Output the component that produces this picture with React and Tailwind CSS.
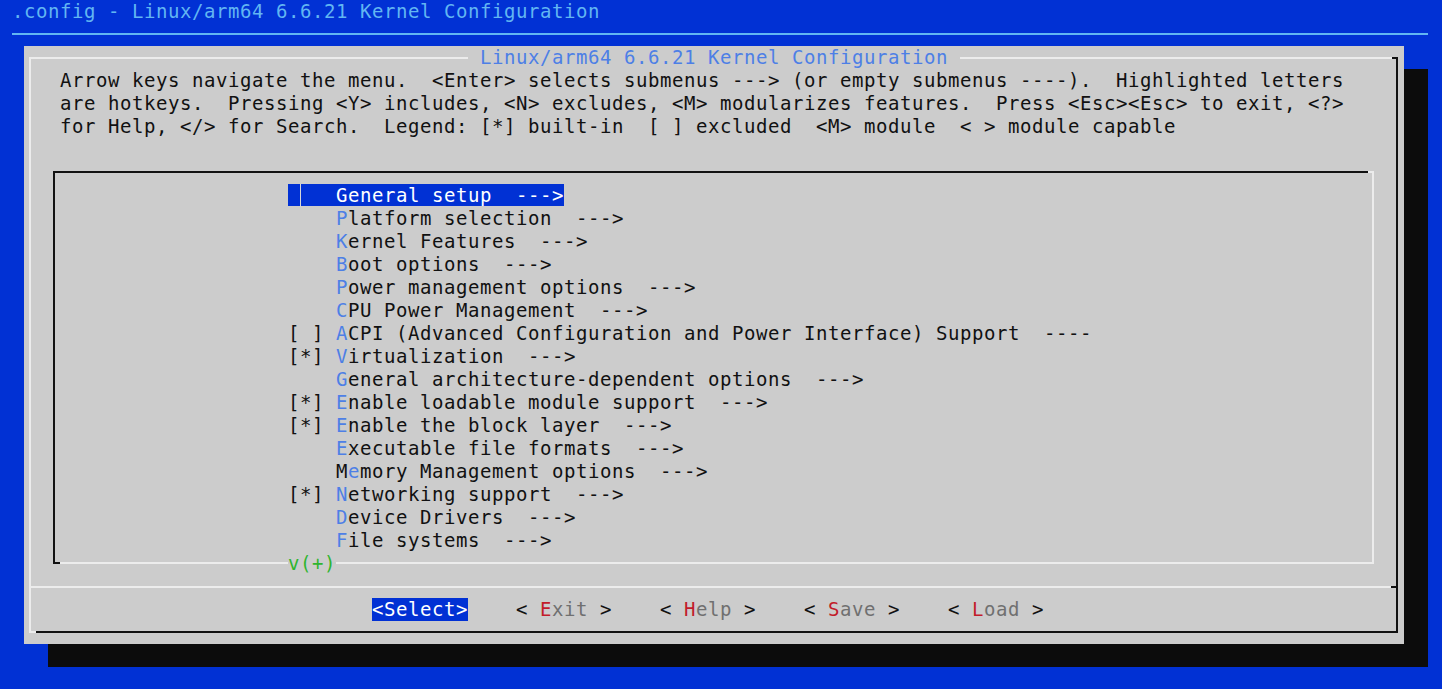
import React from "react";

const items = [
    { p: "    ", pre: "", k: "G", rest: "eneral setup  --->", sel: true },
    { p: "    ", pre: "", k: "P", rest: "latform selection  --->" },
    { p: "    ", pre: "", k: "K", rest: "ernel Features  --->" },
    { p: "    ", pre: "", k: "B", rest: "oot options  --->" },
    { p: "    ", pre: "", k: "P", rest: "ower management options  --->" },
    { p: "    ", pre: "", k: "C", rest: "PU Power Management  --->" },
    { p: "[ ] ", pre: "", k: "A", rest: "CPI (Advanced Configuration and Power Interface) Support  ----" },
    { p: "[*] ", pre: "", k: "V", rest: "irtualization  --->" },
    { p: "    ", pre: "", k: "G", rest: "eneral architecture-dependent options  --->" },
    { p: "[*] ", pre: "", k: "E", rest: "nable loadable module support  --->" },
    { p: "[*] ", pre: "", k: "E", rest: "nable the block layer  --->" },
    { p: "    ", pre: "", k: "E", rest: "xecutable file formats  --->" },
    { p: "    ", pre: "M", k: "e", rest: "mory Management options  --->" },
    { p: "[*] ", pre: "", k: "N", rest: "etworking support  --->" },
    { p: "    ", pre: "", k: "D", rest: "evice Drivers  --->" },
    { p: "    ", pre: "", k: "F", rest: "ile systems  --->" },
];

const buttons = [
    { k: "E", rest: "xit" },
    { k: "H", rest: "elp" },
    { k: "S", rest: "ave" },
    { k: "L", rest: "oad" },
];

const help = [
    "Arrow keys navigate the menu.  <Enter> selects submenus ---> (or empty submenus ----).  Highlighted letters",
    "are hotkeys.  Pressing <Y> includes, <N> excludes, <M> modularizes features.  Press <Esc><Esc> to exit, <?>",
    "for Help, </> for Search.  Legend: [*] built-in  [ ] excluded  <M> module  < > module capable",
];

const MenuRow = ({ item }) => {
    if (item.sel) {
        return (
            <div className="h-[23px]">
                <span className="relative bg-[#0131d4] text-white">
                    {item.p + item.pre + item.k + item.rest}
                    <span className="absolute left-[12px] top-0 h-[23px] w-px bg-[#d6d6d6]"></span>
                </span>
            </div>
        );
    }
    return (
        <div className="h-[23px]">
            {item.p + item.pre}
            <span className="text-[#4d7fe6]">{item.k}</span>
            {item.rest}
        </div>
    );
};

export default function App() {
    return (
        <div className="w-[1442px] h-[689px] overflow-hidden bg-[#0131d4] font-['DejaVu_Sans_Mono','Liberation_Mono',monospace] text-[19px] leading-[23px] tracking-[0.56px] whitespace-pre text-[#111111]">
            {/* Backtitle */}
            <div className="h-[23px] pl-[12px] text-[#62b6f2]">.config - Linux/arm64 6.6.21 Kernel Configuration</div>
            <div className="h-[23px] pt-[10px]">
                <div className="ml-[12px] w-[1416px] h-[2px] bg-[#62b6f2]"></div>
            </div>

            {/* Dialog */}
            <div className="relative ml-[24px] w-[1380px] h-[598px] bg-[#cccccc] pt-[11px] pl-[5px] pr-[6px] pb-[11px] shadow-[24px_23px_0_0_#0c0c0c]">
                <div className="relative h-full flex flex-col border-2 border-t-[#ececec] border-l-[#ececec] border-r-[#111111] border-b-[#111111]">
                    {/* corner pieces */}
                    <span className="absolute -right-[2px] -top-[2px] w-[6px] h-[2px] bg-[#111111]"></span>
                    <span className="absolute -left-[2px] -bottom-[2px] w-[7px] h-[2px] bg-[#ececec]"></span>

                    {/* Help text */}
                    <div className="mt-[10px] pl-[29px]">
                        {help.map((line, i) => (
                            <div key={i} className="h-[23px]">{line}</div>
                        ))}
                    </div>

                    {/* Menu box */}
                    <div className="relative mt-[33px] mx-[22px] h-[393px] border-2 border-t-[#111111] border-l-[#111111] border-r-[#ececec] border-b-[#ececec] pt-[11px] pl-[233px]">
                        <span className="absolute -right-[2px] -top-[2px] w-[6px] h-[2px] bg-[#ececec]"></span>
                        <span className="absolute -left-[2px] -bottom-[2px] w-[7px] h-[2px] bg-[#111111]"></span>
                        {items.map((item, i) => (
                            <MenuRow key={i} item={item} />
                        ))}
                        <span className="absolute left-[233px] top-[379px] h-[23px] bg-[#cccccc] text-[#2fb52f]">v(+)</span>
                    </div>

                    {/* Separator */}
                    <div className="mt-[22px] h-[2px] flex">
                        <div className="flex-1 bg-[#ececec]"></div>
                        <div className="w-[5px] bg-[#111111]"></div>
                    </div>

                    {/* Buttons */}
                    <div className="mt-[10px] h-[23px] pl-[341px] flex gap-[48px]">
                        <span className="bg-[#0131d4] text-white">{"<Select>"}</span>
                        {buttons.map((b) => (
                            <span key={b.k}>
                                {"< "}
                                <span className="text-[#c21c2a]">{b.k}</span>
                                <span className="text-[#707070]">{b.rest}</span>
                                {" >"}
                            </span>
                        ))}
                    </div>
                </div>

                {/* Dialog title */}
                <div className="absolute left-[444px] top-0 h-[23px] bg-[#cccccc] text-[#4d7fe6]">{" Linux/arm64 6.6.21 Kernel Configuration "}</div>
            </div>
        </div>
    );
}
